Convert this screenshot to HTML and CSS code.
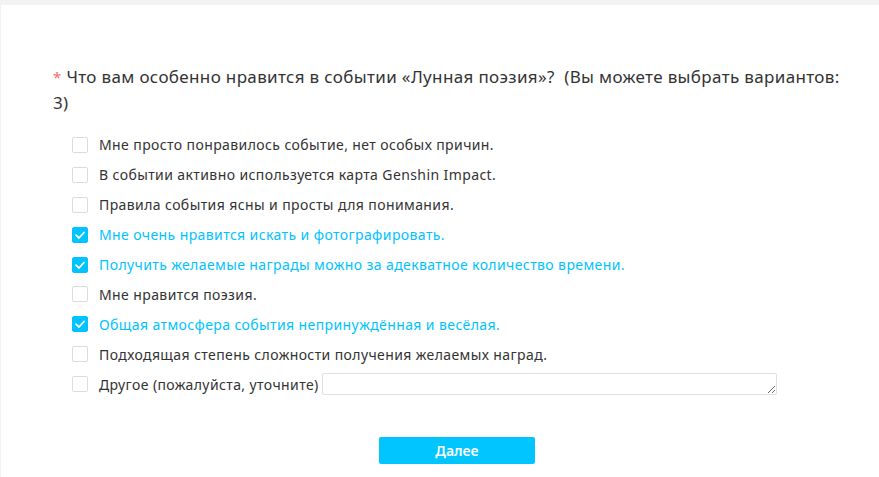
FILE: index.html
```
<!DOCTYPE html>
<html lang="ru">
<head>
<meta charset="utf-8">
<link rel="stylesheet" href="styles.css">
</head>
<body>
<div class="panel">
  <div class="question"><span class="star">*</span> Что вам особенно нравится в событии «Лунная поэзия»?&nbsp; (Вы можете выбрать вариантов: 3)</div>
  <ul class="options">
    <li class="opt"><span class="box"></span><span class="label">Мне просто понравилось событие, нет особых причин.</span></li>
    <li class="opt"><span class="box"></span><span class="label">В событии активно используется карта Genshin Impact.</span></li>
    <li class="opt"><span class="box"></span><span class="label">Правила события ясны и просты для понимания.</span></li>
    <li class="opt checked"><span class="box"><svg viewBox="0 0 16 16" width="16" height="16"><path d="M4 8.2 L7 11 L12 5.5" fill="none" stroke="#fff" stroke-width="1.8" stroke-linecap="round" stroke-linejoin="round"/></svg></span><span class="label">Мне очень нравится искать и фотографировать.</span></li>
    <li class="opt checked"><span class="box"><svg viewBox="0 0 16 16" width="16" height="16"><path d="M4 8.2 L7 11 L12 5.5" fill="none" stroke="#fff" stroke-width="1.8" stroke-linecap="round" stroke-linejoin="round"/></svg></span><span class="label">Получить желаемые награды можно за адекватное количество времени.</span></li>
    <li class="opt"><span class="box"></span><span class="label">Мне нравится поэзия.</span></li>
    <li class="opt checked"><span class="box"><svg viewBox="0 0 16 16" width="16" height="16"><path d="M4 8.2 L7 11 L12 5.5" fill="none" stroke="#fff" stroke-width="1.8" stroke-linecap="round" stroke-linejoin="round"/></svg></span><span class="label">Общая атмосфера события непринуждённая и весёлая.</span></li>
    <li class="opt"><span class="box"></span><span class="label">Подходящая степень сложности получения желаемых наград.</span></li>
    <li class="opt"><span class="box"></span><span class="label">Другое (пожалуйста, уточните)</span><textarea class="other"></textarea></li>
  </ul>
  <div class="actions">
    <button class="next">Далее</button>
  </div>
</div>
</body>
</html>
```
FILE: styles.css
```
html, body {
  margin: 0;
  padding: 0;
}
body {
  background: #f2f2f2;
  font-family: "Noto Sans", "Open Sans", sans-serif;
  color: #333;
  height: 477px;
  overflow: hidden;
}
.panel {
  margin: 5px 0 0 1px;
  background: #fff;
  height: 472px;
  padding: 0;
}
.question {
  padding: 59px 30px 0 52px;
  font-size: 17px;
  line-height: 25px;
  color: #333;
  letter-spacing: 0.35px;
}
.star {
  color: #f56c6c;
  font-size: 15px;
}
.options {
  list-style: none;
  margin: 15px 0 0 0;
  padding: 0 0 0 71px;
}
.opt {
  display: flex;
  align-items: center;
  height: 29.9px;
  font-size: 14px;
  letter-spacing: 0.4px;
  color: #333;
}
.box {
  width: 16px;
  height: 16px;
  box-sizing: border-box;
  border: 1px solid #dcdcdc;
  border-radius: 2px;
  background: #fff;
  flex: none;
  margin-right: 11px;
  display: flex;
}
.box svg {
  margin: -1px;
}
.opt.checked .box {
  background: #00c3ff;
  border-color: #00c3ff;
}
.opt.checked .label {
  color: #00c3ff;
}
.other {
  margin-left: 3px;
  width: 455px;
  height: 22px;
  box-sizing: border-box;
  border: 1px solid #e0e0e0;
  border-radius: 2px;
  resize: vertical;
  padding: 0;
}
.actions {
  padding: 38px 0 0 378px;
}
.next {
  width: 156px;
  height: 27px;
  border: none;
  border-radius: 2px;
  background: #00c5ff;
  color: #fff;
  font-family: "Noto Sans", "Open Sans", sans-serif;
  font-size: 14px;
  font-weight: 600;
  padding: 0;
}
```
